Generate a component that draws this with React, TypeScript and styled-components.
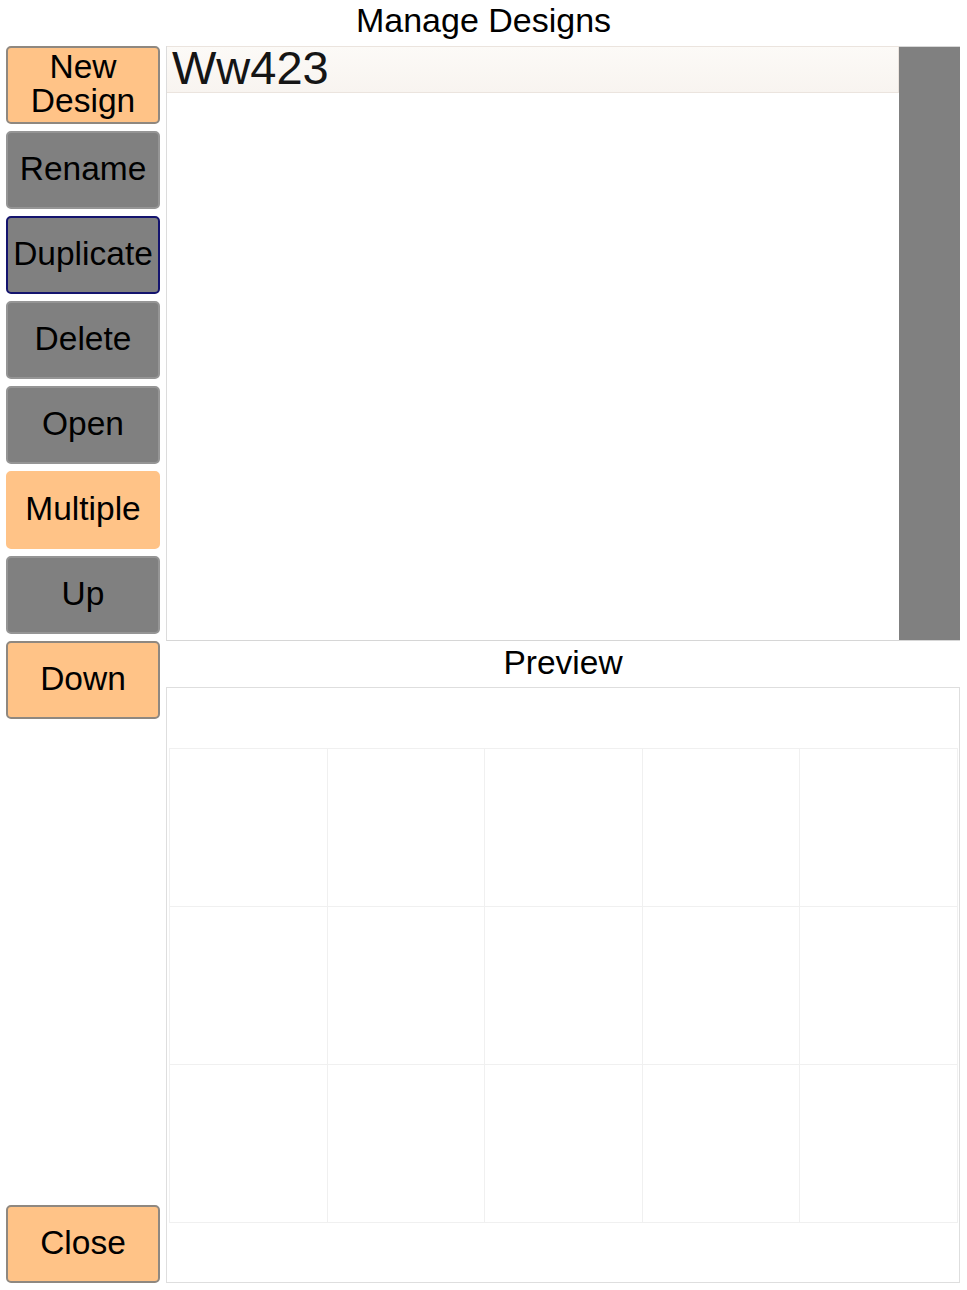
import React from "react";
import styled, { createGlobalStyle } from "styled-components";

const GlobalStyle = createGlobalStyle`
  html, body {
    margin: 0;
    padding: 0;
    background: #ffffff;
    font-family: "Liberation Sans", Arial, Helvetica, sans-serif;
    color: #000;
  }
  * { box-sizing: border-box; }
`;

const Page = styled.div`
  width: 967px;
  height: 1290px;
  display: flex;
  flex-direction: column;
  background: #fff;
`;

const Title = styled.h1`
  margin: 0;
  height: 46px;
  display: flex;
  align-items: center;
  justify-content: center;
  padding-bottom: 5px;
  font-size: 34px;
  font-weight: 400;
  color: #000;
`;

const Body = styled.div`
  flex: 1;
  display: flex;
  gap: 6px;
  padding: 0 7px 7px 6px;
  min-height: 0;
`;

const Sidebar = styled.div`
  width: 154px;
  display: flex;
  flex-direction: column;
  gap: 7px;
`;

type Tone = "orange" | "grey";
type Edge = "plain" | "none" | "focus";

const fill = (t: Tone) => (t === "orange" ? "#ffc387" : "#808080");

const edgeColor = (t: Tone, e: Edge) => {
  if (e === "focus") return "#14146e";
  if (e === "none") return fill(t);
  return t === "orange" ? "#8f8880" : "#959595";
};

const ActionButton = styled.button<{ $tone: Tone; $edge: Edge }>`
  height: 78px;
  width: 100%;
  border-radius: 5px;
  font-family: inherit;
  font-size: 33.5px;
  line-height: 34px;
  color: #000;
  padding: 0 0 3px;
  display: flex;
  align-items: center;
  justify-content: center;
  text-align: center;
  cursor: pointer;
  background: ${(p) => fill(p.$tone)};
  border: 2px solid ${(p) => edgeColor(p.$tone, p.$edge)};
`;

const Spacer = styled.div`
  flex: 1;
`;

const Main = styled.div`
  flex: 1;
  display: flex;
  flex-direction: column;
  min-width: 0;
`;

const ListPanel = styled.div`
  height: 595px;
  display: flex;
  border-left: 1px solid #dcdcdc;
  border-bottom: 1px solid #d6d6d6;
`;

const List = styled.div`
  flex: 1;
  background: #fff;
  display: flex;
  flex-direction: column;
`;

const DesignRow = styled.div`
  height: 47px;
  display: flex;
  align-items: center;
  padding-left: 5px;
  padding-bottom: 5px;
  font-size: 47px;
  color: #151515;
  background: linear-gradient(#fcfaf7, #f8f4f0);
  border: 1px solid #ebe4de;
  border-left: none;
`;

const ScrollTrack = styled.div`
  width: 61px;
  background: #808080;
  border-top: 1px solid #d8d8d8;
`;

const SectionLabel = styled.div`
  height: 46px;
  display: flex;
  align-items: center;
  justify-content: center;
  font-size: 33.5px;
  padding-bottom: 2px;
`;

const PreviewBox = styled.div`
  flex: 1;
  border: 1px solid #dedede;
  display: flex;
  flex-direction: column;
  justify-content: center;
  padding: 0 1px 0 2px;
`;

const PreviewGrid = styled.div`
  display: grid;
  grid-template-columns: repeat(5, 1fr);
  grid-auto-rows: 158px;
  border-top: 1px solid #f0f0f0;
  border-left: 1px solid #f0f0f0;
`;

const PreviewCell = styled.div`
  border-right: 1px solid #f0f0f0;
  border-bottom: 1px solid #f0f0f0;
`;

const actions: { label: React.ReactNode; tone: Tone; edge: Edge }[] = [
  { label: <>New<br />Design</>, tone: "orange", edge: "plain" },
  { label: "Rename", tone: "grey", edge: "plain" },
  { label: "Duplicate", tone: "grey", edge: "focus" },
  { label: "Delete", tone: "grey", edge: "plain" },
  { label: "Open", tone: "grey", edge: "plain" },
  { label: "Multiple", tone: "orange", edge: "none" },
  { label: "Up", tone: "grey", edge: "plain" },
  { label: "Down", tone: "orange", edge: "plain" },
];

export default function App() {
  return (
    <>
      <GlobalStyle />
      <Page>
        <Title>Manage Designs</Title>
        <Body>
          <Sidebar>
            {actions.map((a, i) => (
              <ActionButton key={i} $tone={a.tone} $edge={a.edge}>
                {a.label}
              </ActionButton>
            ))}
            <Spacer />
            <ActionButton $tone="orange" $edge="plain">
              Close
            </ActionButton>
          </Sidebar>
          <Main>
            <ListPanel>
              <List>
                <DesignRow>Ww423</DesignRow>
              </List>
              <ScrollTrack />
            </ListPanel>
            <SectionLabel>Preview</SectionLabel>
            <PreviewBox>
              <PreviewGrid>
                {Array.from({ length: 15 }, (_, i) => (
                  <PreviewCell key={i} />
                ))}
              </PreviewGrid>
            </PreviewBox>
          </Main>
        </Body>
      </Page>
    </>
  );
}
